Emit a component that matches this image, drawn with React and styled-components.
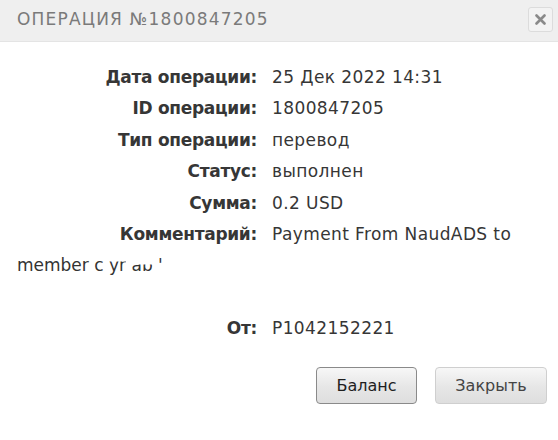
import React from "react";
import styled, { createGlobalStyle } from "styled-components";

const Global = createGlobalStyle`
  html, body { margin: 0; padding: 0; background: #fff; }
  body { font-family: "DejaVu Sans", "Inter", sans-serif; }
`;

const Dialog = styled.div`
  width: 558px;
  height: 440px;
  background: #fff;
  display: flex;
  flex-direction: column;
`;

const Header = styled.div`
  height: 41px;
  background: #efefef;
  border-bottom: 1px solid #e4e4e4;
  display: flex;
  align-items: center;
  justify-content: space-between;
  padding: 0 5px 0 17px;
`;

const Title = styled.div`
  font-family: "DejaVu Sans", sans-serif;
  font-size: 17px;
  letter-spacing: 1.2px;
  color: #7a7a7a;
  text-transform: uppercase;
  margin-top: -3px;
`;

const CloseBtn = styled.button`
  width: 25px;
  height: 25px;
  box-sizing: border-box;
  border: 1px solid #dcdcdc;
  border-radius: 3px;
  background: #f3f3f3;
  display: flex;
  align-items: center;
  justify-content: center;
  padding: 0;
  margin-top: -2px;
`;

const Body = styled.div`
  padding: 20px 17px 0 17px;
  font-size: 17px;
  color: #333;
  line-height: 31.4px;
`;

const Row = styled.div`
  white-space: normal;
`;

const Label = styled.span`
  display: inline-block;
  width: 240px;
  text-align: right;
  font-weight: 700;
  color: #363636;
  letter-spacing: -0.3px;
`;

const Value = styled.span`
  margin-left: 15px;
  color: #363636;
  letter-spacing: 0.4px;
`;

const Spacer = styled.div`
  height: 31.4px;
`;

const Faded = styled.span`
  display: inline-block;
  clip-path: inset(${(p) => p.$top || 0}% 0 ${(p) => p.$bottom || 0}% 0);
`;

const Footer = styled.div`
  display: flex;
  justify-content: flex-end;
  gap: 18px;
  padding: 0 11px 0 0;
  margin-top: 22px;
`;

const Button = styled.button`
  height: 37px;
  width: ${(p) => p.$w}px;
  box-sizing: border-box;
  border-radius: 4px;
  border: 1px solid ${(p) => (p.$primary ? "#8a8a8a" : "#cfcfcf")};
  background: linear-gradient(#f7f7f7, #e6e6e6 55%, #dedede);
  font-family: "DejaVu Sans", "Liberation Sans", sans-serif;
  font-size: 16px;
  color: ${(p) => (p.$primary ? "#1e1e1e" : "#444")};
  padding: 0;
`;

const rows = [
  ["Дата операции:", "25 Дек 2022 14:31"],
  ["ID операции:", "1800847205"],
  ["Тип операции:", "перевод"],
  ["Статус:", "выполнен"],
  ["Сумма:", "0.2 USD"],
];

export default function App() {
  return (
    <>
      <Global />
      <Dialog>
        <Header>
          <Title>Операция №1800847205</Title>
          <CloseBtn aria-label="close">
            <svg width="11" height="11" viewBox="0 0 11 11">
              <path d="M1.5 1.5 L9.5 9.5 M9.5 1.5 L1.5 9.5" stroke="#8a8a8a" strokeWidth="2.6" strokeLinecap="round" />
            </svg>
          </CloseBtn>
        </Header>
        <Body>
          {rows.map(([l, v]) => (
            <Row key={l}>
              <Label>{l}</Label>
              <Value>{v}</Value>
            </Row>
          ))}
          <Row>
            <Label>Комментарий:</Label>
            <Value>Payment From NaudADS to</Value>
            <br />
            member <Faded $bottom={30}>c</Faded> <Faded $top={35} $bottom={20}>yr</Faded> <Faded $top={45}>ab</Faded> <Faded $top={20} $bottom={50}>'</Faded>
          </Row>
          <Spacer />
          <Row>
            <Label>От:</Label>
            <Value>P1042152221</Value>
          </Row>
        </Body>
        <Footer>
          <Button $primary $w={101}>Баланс</Button>
          <Button $w={112}>Закрыть</Button>
        </Footer>
      </Dialog>
    </>
  );
}
